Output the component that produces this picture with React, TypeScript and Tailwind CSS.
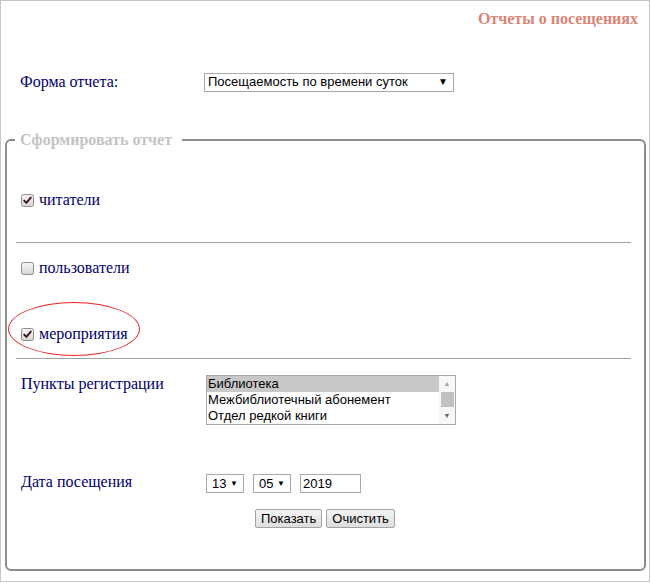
import React from 'react'

const serif = { fontFamily: '"Liberation Serif", "Times New Roman", serif' }

// Small grey checkbox in the old Windows style
const CheckBox = ({ checked }: { checked?: boolean }) => (
  <svg width="13" height="13" viewBox="0 0 13 13" className="flex-shrink-0">
    <defs>
      <linearGradient id="cbg" x1="0" y1="0" x2="0" y2="1">
        <stop offset="0" stopColor="#f6f6f6" />
        <stop offset="1" stopColor="#d6d6d6" />
      </linearGradient>
    </defs>
    <rect x="0.5" y="0.5" width="12" height="12" rx="2" fill="url(#cbg)" stroke="#8e8e8e" />
    {checked && (
      <path d="M3.2 6.6 L5.4 8.9 L9.8 3.6" fill="none" stroke="#3b1717" strokeWidth="1.9" strokeLinecap="round" strokeLinejoin="round" />
    )}
  </svg>
)

const Arrow = () => <span className="text-[10px] leading-none text-black">▼</span>

const SmallSelect = ({ value }: { value: string }) => (
  <div className="flex items-center justify-between w-[38px] h-[19px] border border-[#a9a9a9] bg-white pl-[5px] pr-[5px] text-[13px] text-black">
    <span>{value}</span>
    <span className="text-[8px] leading-none">▼</span>
  </div>
)

const Button = ({ label }: { label: string }) => (
  <div className="h-[19px] px-[5px] flex items-center border border-[#a3a3a3] rounded-[2px] bg-gradient-to-b from-[#f4f4f4] to-[#dedede] text-[13px] text-black">
    {label}
  </div>
)

export default function App() {
  const points = ['Библиотека', 'Межбиблиотечный абонемент', 'Отдел редкой книги']

  return (
    <div className="relative w-[650px] h-[582px] border border-[#c6c6c6] bg-white" style={serif}>
      {/* title */}
      <div className="pt-[8px] pr-[11px] text-right text-[16px] leading-[20px] font-bold text-[#d98574]">
        Отчеты о посещениях
      </div>

      {/* report form */}
      <div className="mt-[43px] flex items-center h-[20px] pl-[19px]">
        <span className="w-[184px] text-[16px] text-[#00006e]">Форма отчета:</span>
        <div
          className="flex items-center justify-between w-[250px] h-[19px] border border-[#a9a9a9] bg-white pl-[3px] pr-[5px] text-[13px] text-black"
          style={{ fontFamily: '"Liberation Sans", Arial, sans-serif' }}
        >
          <span>Посещаемость по времени суток</span>
          <Arrow />
        </div>
      </div>

      <fieldset className="mt-[38px] ml-[4px] w-[641px] border-2 border-[#8c8c8c] rounded-[6px] px-[8px] pb-[41px]">
        <legend className="pl-[5px] pr-[10px] text-[16px] leading-[20px] font-bold text-[#c4c4c4]">
          Сформировать отчет
        </legend>

        <div className="mt-[40px] h-[20px] flex items-center gap-[5px] pl-[6px] text-[16px] text-[#00006e]">
          <CheckBox checked />
          <span>читатели</span>
        </div>

        <div className="mt-[32px] ml-[1px] mr-[5px] h-px bg-[#a0a0a0]" />

        <div className="mt-[15px] h-[20px] flex items-center gap-[5px] pl-[6px] text-[16px] text-[#00006e]">
          <CheckBox />
          <span>пользователи</span>
        </div>

        <div className="mt-[46px] h-[20px] flex items-center gap-[5px] pl-[6px] text-[16px] text-[#00006e]">
          <CheckBox checked />
          <span>мероприятия</span>
        </div>

        <div className="mt-[14px] ml-[1px] mr-[5px] h-px bg-[#a0a0a0]" />

        {/* registration points */}
        <div className="mt-[16px] flex items-start pl-[6px]">
          <span className="w-[185px] -mt-[1px] text-[16px] leading-[20px] text-[#00006e]">Пункты регистрации</span>
          <div
            className="flex w-[250px] h-[50px] border border-[#a9a9a9] bg-white text-[13px] leading-[16px] text-black"
            style={{ fontFamily: '"Liberation Sans", Arial, sans-serif' }}
          >
            <div className="flex-1 flex flex-col">
              {points.map((p, i) => (
                <div key={p} className={`h-[16px] pl-[1px] ${i === 0 ? 'bg-[#c8c8c8]' : ''}`}>
                  {p}
                </div>
              ))}
            </div>
            <div className="w-[16px] flex flex-col items-center bg-[#f7f7f7]">
              <div className="h-[16px] flex items-center text-[7px] text-[#a3a3a3]">▲</div>
              <div className="w-[13px] h-[15px] bg-[#c1c1c1]" />
              <div className="flex-1 flex items-center text-[7px] text-[#606060]">▼</div>
            </div>
          </div>
        </div>

        {/* date */}
        <div className="mt-[49px] flex items-center h-[19px] pl-[6px]">
          <span className="w-[185px] -mt-[3px] text-[16px] text-[#00006e]">Дата посещения</span>
          <div className="flex items-center gap-[9px]" style={{ fontFamily: '"Liberation Sans", Arial, sans-serif' }}>
            <SmallSelect value="13" />
            <SmallSelect value="05" />
            <div className="w-[61px] h-[19px] border border-[#a9a9a9] bg-white pl-[2px] text-[13px] leading-[17px] text-black">
              2019
            </div>
          </div>
        </div>

        <div className="mt-[16px] flex gap-[4px] pl-[240px]" style={{ fontFamily: '"Liberation Sans", Arial, sans-serif' }}>
          <Button label="Показать" />
          <Button label="Очистить" />
        </div>
      </fieldset>

      {/* red hand-drawn highlight around the events checkbox */}
      <div className="absolute left-[7px] top-[301px] w-[132px] h-[54px] rounded-[50%] border border-[#e8262b]" />
    </div>
  )
}
